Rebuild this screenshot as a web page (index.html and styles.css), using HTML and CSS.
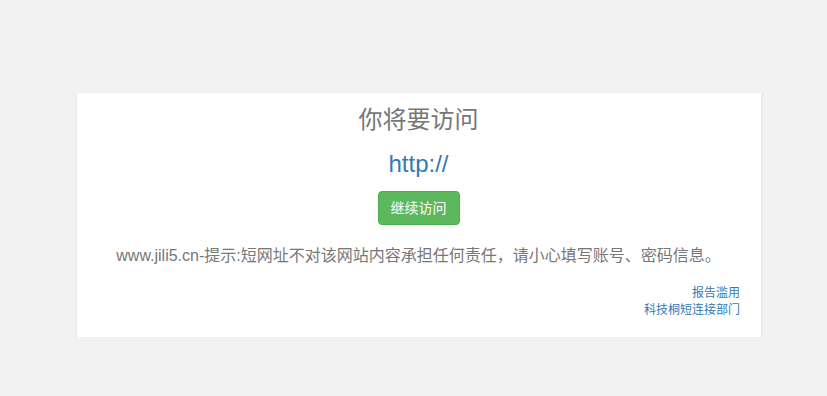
FILE: index.html
```html
<!DOCTYPE html>
<html lang="zh-CN">
<head>
  <meta charset="UTF-8" />
  <meta name="viewport" content="width=device-width, initial-scale=1.0"/>
  <title>你将要访问</title>
  <link rel="stylesheet" href="styles.css">
</head>
<body>
  <div class="panel">
    <h3 class="title">你将要访问</h3>
    <div class="target-url">http://</div>
    <a class="btn-go" href="#">继续访问</a>
    <p class="notice">www.jili5.cn-提示:短网址不对该网站内容承担任何责任，请小心填写账号、密码信息。</p>
    <div class="footer-links">
      <a href="#">报告滥用</a>
      <a href="#">科技桐短连接部门</a>
    </div>
  </div>
</body>
</html>
```

FILE: styles.css
```css
body {
  margin: 0;
  padding: 93px 0 0 77px;
  background-color: #f2f2f2;
  font-family: "Liberation Sans", "Noto Sans CJK SC", sans-serif;
  color: #777;
}
.panel {
  width: 684px;
  box-sizing: border-box;
  padding: 14px 21px 18px 20px;
  background-color: #fff;
  box-shadow: 0 1px 3px rgba(0, 0, 0, 0.1);
  display: flex;
  flex-direction: column;
  align-items: center;
}
.title {
  margin: 0;
  font-size: 24px;
  line-height: 26px;
  font-weight: normal;
  color: #777;
}
.target-url {
  margin-top: 18px;
  font-size: 24px;
  line-height: 26px;
  color: #337ab7;
}
.btn-go {
  margin-top: 14px;
  box-sizing: border-box;
  height: 34px;
  padding: 0 12px;
  border: 1px solid #4cae4c;
  border-radius: 4px;
  background-color: #5cb85c;
  color: #fff;
  font-size: 14px;
  line-height: 32px;
  text-decoration: none;
}
.notice {
  margin: 20px 0 0;
  font-size: 16px;
  line-height: 22px;
  color: #777;
}
.footer-links {
  align-self: stretch;
  margin-top: 18px;
  display: flex;
  flex-direction: column;
  align-items: flex-end;
}
.footer-links a {
  font-size: 12px;
  line-height: 17px;
  color: #337ab7;
  text-decoration: none;
}
```
